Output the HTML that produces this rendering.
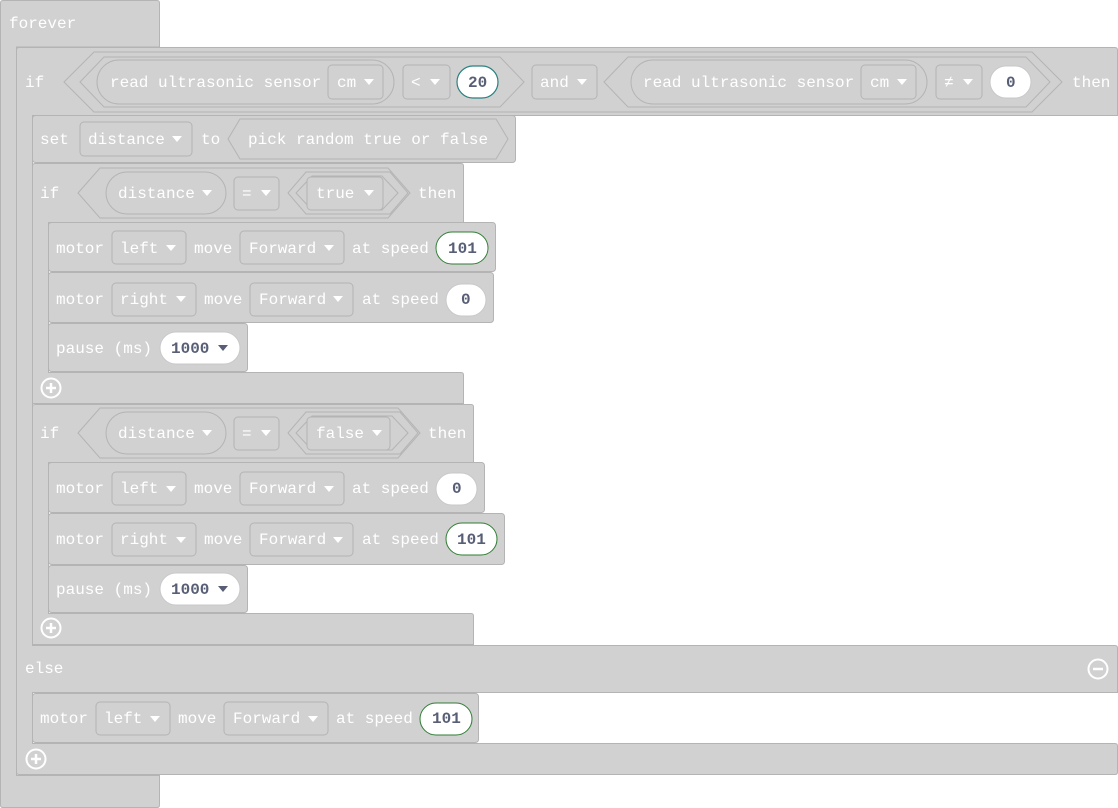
<!DOCTYPE html>
<html><head><meta charset="utf-8"><style>
html,body{margin:0;padding:0;background:#fff;width:1118px;height:808px;overflow:hidden}
svg{display:block}
.b{fill:#d1d1d1;stroke:#b4b4b4;stroke-width:1}
.f{fill:#d1d1d1;stroke:#b4b4b4;stroke-width:1}
.w{fill:#fff;stroke:#c8c8c8;stroke-width:1}
.g{fill:#fff;stroke:#2e7d32;stroke-width:1}
.tl{fill:#fff;stroke:#2a8080;stroke-width:1.2}
text{font-family:"Liberation Mono","DejaVu Sans Mono",monospace;font-size:16px;fill:#fff}
.n{fill:#575e75;font-weight:bold}
.a{fill:#fff}
.ad{fill:#575e75}
</style></head><body>
<svg width="1118" height="808" viewBox="0 0 1118 808" xmlns="http://www.w3.org/2000/svg">
<path class="b" d="M3,0.5 H157 Q159.5,0.5 159.5,3 V47 H16.5 V775.5 H159.5 V805 Q159.5,807.5 157,807.5 H3 Q0.5,807.5 0.5,805 V3 Q0.5,0.5 3,0.5Z"/>
<text x="9" y="28">forever</text>
<path class="b" d="M19,47.5 H1115 Q1117.5,47.5 1117.5,50 V115.5 H32.5 V645.5 H1115 Q1117.5,645.5 1117.5,648 V692.5 H32.5 V743.5 H1115 Q1117.5,743.5 1117.5,746 V772 Q1117.5,774.5 1115,774.5 H19 Q16.5,774.5 16.5,772 V50 Q16.5,47.5 19,47.5Z"/>
<text x="25" y="87">if</text>
<path class="f" d="M64,82 L94,52 H1032 L1062,82 L1032,112 H94Z"/>
<path class="f" d="M80,82 L104,57 H500 L524,82 L500,107 H104Z"/>
<rect class="f" x="97" y="60" width="297" height="44" rx="22"/>
<text x="110" y="87">read ultrasonic sensor</text>
<rect class="f" x="328" y="65" width="55" height="34" rx="4"/>
<text x="337" y="87">cm</text><path class="a" d="M364,79h10l-5,6z"/>
<rect class="f" x="403" y="65" width="47" height="34" rx="4"/>
<text x="411" y="87">&lt;</text><path class="a" d="M430,79h10l-5,6z"/>
<rect class="tl" x="457" y="66" width="41" height="32" rx="16"/>
<text class="n" x="468" y="87">20</text>
<rect class="f" x="532" y="65" width="65" height="34" rx="4"/>
<text x="540" y="87">and</text><path class="a" d="M577,79h10l-5,6z"/>
<path class="f" d="M604,82 L628,57 H1026 L1050,82 L1026,107 H628Z"/>
<rect class="f" x="631" y="60" width="296" height="44" rx="22"/>
<text x="643" y="87">read ultrasonic sensor</text>
<rect class="f" x="861" y="65" width="55" height="34" rx="4"/>
<text x="870" y="87">cm</text><path class="a" d="M897,79h10l-5,6z"/>
<rect class="f" x="936" y="65" width="46" height="34" rx="4"/>
<text x="944" y="87">≠</text><path class="a" d="M963,79h10l-5,6z"/>
<rect class="w" x="990" y="66" width="41" height="32" rx="16"/>
<text class="n" x="1006" y="87">0</text>
<text x="1072" y="87">then</text>
<rect class="b" x="32.5" y="115.5" width="483" height="47" rx="3"/>
<text x="40" y="144">set</text>
<rect class="f" x="80" y="122" width="112" height="34" rx="4"/>
<text x="88" y="144">distance</text><path class="a" d="M172,136h10l-5,6z"/>
<text x="201" y="144">to</text>
<path class="f" d="M228,139 L240,119 H496 L508,139 L496,159 H240Z"/>
<text x="248" y="144">pick random true or false</text>
<path class="b" d="M35,163.5 H461 Q463.5,163.5 463.5,166 V222.5 H48.5 V372.5 H461 Q463.5,372.5 463.5,375 V403.5 H32.5 V166 Q32.5,163.5 35,163.5Z"/>
<text x="40" y="198">if</text>
<path class="f" d="M78,193 L100,168 H388 L410,193 L388,218 H100Z"/>
<rect class="f" x="106" y="172" width="120" height="42" rx="21"/>
<text x="118" y="198">distance</text><path class="a" d="M202,190h10l-5,6z"/>
<rect class="f" x="234" y="177" width="45" height="33" rx="4"/>
<text x="242" y="198">=</text><path class="a" d="M261,190h10l-5,6z"/>
<path class="f" d="M288,193 L306,172 H390 L408,193 L390,214 H306Z"/>
<path class="f" d="M296,193 L312,176 H382 L398,193 L382,210 H312Z"/>
<rect class="f" x="307" y="177" width="76" height="33" rx="4"/>
<text x="316" y="198">true</text><path class="a" d="M364,190h10l-5,6z"/>
<text x="418" y="198">then</text>
<rect class="b" x="48.5" y="222.5" width="447" height="49" rx="3"/>
<text x="56" y="253">motor</text>
<rect class="f" x="112" y="231" width="74" height="33" rx="4"/>
<text x="120" y="253">left</text><path class="a" d="M166,245h10l-5,6z"/>
<text x="194" y="253">move</text>
<rect class="f" x="240" y="231" width="104" height="33" rx="4"/>
<text x="249" y="253">Forward</text><path class="a" d="M324,245h10l-5,6z"/>
<text x="352" y="253">at speed</text>
<rect class="g" x="436" y="232" width="52" height="32" rx="16"/>
<text class="n" x="448" y="253">101</text>
<rect class="b" x="48.5" y="272.5" width="445" height="50" rx="3"/>
<text x="56" y="304">motor</text>
<rect class="f" x="112" y="283" width="84" height="33" rx="4"/>
<text x="120" y="304">right</text><path class="a" d="M176,296h10l-5,6z"/>
<text x="204" y="304">move</text>
<rect class="f" x="250" y="283" width="103" height="33" rx="4"/>
<text x="259" y="304">Forward</text><path class="a" d="M333,296h10l-5,6z"/>
<text x="362" y="304">at speed</text>
<rect class="w" x="446" y="284" width="40" height="32" rx="16"/>
<text class="n" x="461" y="304">0</text>
<rect class="b" x="48.5" y="323.5" width="199" height="48" rx="3"/>
<text x="56" y="353">pause (ms)</text>
<rect class="w" x="160" y="332" width="80" height="32" rx="16"/>
<text class="n" x="171" y="353">1000</text><path class="ad" d="M218,345h10l-5,6z"/>
<circle cx="51" cy="388" r="9.5" fill="none" stroke="#fff" stroke-width="2"/>
<path d="M51,383v10M46,388h10" stroke="#fff" stroke-width="2.5"/>
<path class="b" d="M35,404.5 H471 Q473.5,404.5 473.5,407 V462.5 H48.5 V613.5 H471 Q473.5,613.5 473.5,616 V644.5 H32.5 V407 Q32.5,404.5 35,404.5Z"/>
<text x="40" y="438">if</text>
<path class="f" d="M78,433 L100,408 H398 L420,433 L398,458 H100Z"/>
<rect class="f" x="106" y="412" width="120" height="42" rx="21"/>
<text x="118" y="438">distance</text><path class="a" d="M202,430h10l-5,6z"/>
<rect class="f" x="234" y="417" width="45" height="33" rx="4"/>
<text x="242" y="438">=</text><path class="a" d="M261,430h10l-5,6z"/>
<path class="f" d="M288,433 L306,412 H400 L418,433 L400,454 H306Z"/>
<path class="f" d="M296,433 L312,416 H392 L408,433 L392,450 H312Z"/>
<rect class="f" x="307" y="417" width="83" height="33" rx="4"/>
<text x="316" y="438">false</text><path class="a" d="M372,430h10l-5,6z"/>
<text x="428" y="438">then</text>
<rect class="b" x="48.5" y="462.5" width="436" height="50" rx="3"/>
<text x="56" y="493">motor</text>
<rect class="f" x="112" y="472" width="74" height="33" rx="4"/>
<text x="120" y="493">left</text><path class="a" d="M166,486h10l-5,6z"/>
<text x="194" y="493">move</text>
<rect class="f" x="240" y="472" width="104" height="33" rx="4"/>
<text x="249" y="493">Forward</text><path class="a" d="M324,486h10l-5,6z"/>
<text x="352" y="493">at speed</text>
<rect class="w" x="436" y="473" width="41" height="32" rx="16"/>
<text class="n" x="452" y="493">0</text>
<rect class="b" x="48.5" y="513.5" width="456" height="51" rx="3"/>
<text x="56" y="544">motor</text>
<rect class="f" x="112" y="523" width="84" height="33" rx="4"/>
<text x="120" y="544">right</text><path class="a" d="M176,537h10l-5,6z"/>
<text x="204" y="544">move</text>
<rect class="f" x="250" y="523" width="103" height="33" rx="4"/>
<text x="259" y="544">Forward</text><path class="a" d="M333,537h10l-5,6z"/>
<text x="362" y="544">at speed</text>
<rect class="g" x="446" y="523" width="51" height="32" rx="16"/>
<text class="n" x="457" y="544">101</text>
<rect class="b" x="48.5" y="565.5" width="199" height="47" rx="3"/>
<text x="56" y="594">pause (ms)</text>
<rect class="w" x="160" y="573" width="80" height="32" rx="16"/>
<text class="n" x="171" y="594">1000</text><path class="ad" d="M218,586h10l-5,6z"/>
<circle cx="51" cy="628" r="9.5" fill="none" stroke="#fff" stroke-width="2"/>
<path d="M51,623v10M46,628h10" stroke="#fff" stroke-width="2.5"/>
<text x="25" y="673">else</text>
<circle cx="1098" cy="669" r="9.5" fill="none" stroke="#fff" stroke-width="2"/>
<path d="M1093,669h10" stroke="#fff" stroke-width="2.5"/>
<rect class="b" x="32.5" y="693.5" width="446" height="49" rx="3"/>
<text x="40" y="723">motor</text>
<rect class="f" x="96" y="702" width="74" height="33" rx="4"/>
<text x="104" y="723">left</text><path class="a" d="M150,716h10l-5,6z"/>
<text x="178" y="723">move</text>
<rect class="f" x="224" y="702" width="104" height="33" rx="4"/>
<text x="233" y="723">Forward</text><path class="a" d="M308,716h10l-5,6z"/>
<text x="336" y="723">at speed</text>
<rect class="g" x="420" y="703" width="52" height="32" rx="16"/>
<text class="n" x="432" y="723">101</text>
<circle cx="36" cy="759" r="9.5" fill="none" stroke="#fff" stroke-width="2"/>
<path d="M36,754v10M31,759h10" stroke="#fff" stroke-width="2.5"/>
</svg>
</body></html>
